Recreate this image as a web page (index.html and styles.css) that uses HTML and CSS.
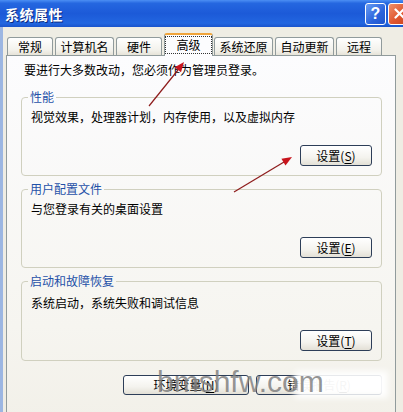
FILE: index.html
```html
<!DOCTYPE html>
<html lang="zh-CN">
<head>
    <meta charset="UTF-8">
    <meta name="viewport" content="width=device-width, initial-scale=1.0">
    <title>系统属性</title>
    <link rel="stylesheet" href="styles.css">
</head>
<body>
    <div class="window">
        <div class="titlebar">
            <span class="title">系统属性</span>
            <div class="caption-buttons">
                <span class="cap-btn help">?</span>
                <span class="cap-btn close">
                    <svg width="11" height="11" viewBox="0 0 11 11"><path d="M1.5 1.5 L9.5 9.5 M9.5 1.5 L1.5 9.5" stroke="#fff" stroke-width="2.2" stroke-linecap="round"/></svg>
                </span>
            </div>
        </div>

        <div class="client">
            <div class="tabs">
                <div class="tab">常规</div>
                <div class="tab tab-long">计算机名</div>
                <div class="tab">硬件</div>
                <div class="tab active"><span class="focus">高级</span></div>
                <div class="tab tab-long">系统还原</div>
                <div class="tab tab-long">自动更新</div>
                <div class="tab">远程</div>
            </div>

            <div class="page">
                <p class="intro">要进行大多数改动，您必须作为管理员登录。</p>

                <fieldset class="group">
                    <legend>性能</legend>
                    <p>视觉效果，处理器计划，内存使用，以及虚拟内存</p>
                    <div class="actions"><button class="btn">设置(<u>S</u>)</button></div>
                </fieldset>

                <fieldset class="group">
                    <legend>用户配置文件</legend>
                    <p>与您登录有关的桌面设置</p>
                    <div class="actions"><button class="btn">设置(<u>E</u>)</button></div>
                </fieldset>

                <fieldset class="group group-last">
                    <legend>启动和故障恢复</legend>
                    <p>系统启动，系统失败和调试信息</p>
                    <div class="actions"><button class="btn">设置(<u>T</u>)</button></div>
                </fieldset>

                <div class="footer-buttons">
                    <button class="btn wide">环境变量(<u>N</u>)</button>
                    <button class="btn wide">错误报告(<u>R</u>)</button>
                </div>
            </div>
        </div>

        <!-- red pointer arrows drawn on top of the dialog -->
        <svg class="marks" width="403" height="412" viewBox="0 0 403 412">
            <line x1="149" y1="106" x2="178" y2="70" stroke="#8e1c1c" stroke-width="1.2"/>
            <polygon points="184,62 181,72.3 174.7,67.3" fill="#c8141c"/>
            <line x1="234" y1="192" x2="284" y2="162" stroke="#8e1c1c" stroke-width="1.2"/>
            <polygon points="292,157 285.5,165.6 281.4,158.8" fill="#c8141c"/>
        </svg>

        <div class="smudge"></div>
        <div class="watermark">bmshfw.com</div>
    </div>
</body>
</html>
```

FILE: styles.css
```css
html, body {
    margin: 0;
    overflow: hidden;
}

body {
    font-family: "Noto Sans CJK SC", "Liberation Sans", sans-serif;
    font-size: 12px;
    line-height: 16px;
    color: #000;
    background: #fff;
}

.window {
    position: relative;
    width: 412px;
    height: 412px;
    overflow: hidden;
}

/* title bar */
.titlebar {
    height: 27px;
    display: flex;
    align-items: center;
    padding: 0 2px 0 5px;
    background: linear-gradient(#4c8ff4 0%, #2567e0 12%, #1c5ad8 50%, #2266e0 86%, #1a54cc 100%);
}

.title {
    color: #fff;
    font-weight: bold;
    font-size: 14px;
    letter-spacing: 0.5px;
    text-shadow: 1px 1px 0 #0c2a80;
}

.caption-buttons {
    margin-left: auto;
    display: flex;
    gap: 2px;
}

.cap-btn {
    width: 19px;
    height: 20px;
    border: 1px solid #fff;
    border-radius: 3px;
    display: flex;
    align-items: center;
    justify-content: center;
    color: #fff;
    font-family: "Liberation Sans", sans-serif;
    font-weight: bold;
    font-size: 16px;
}

.help {
    background: linear-gradient(135deg, #6a9cf2, #2a63dc 60%, #1f55cc);
}

.close {
    width: 20px;
    background: linear-gradient(135deg, #f0906a, #e0562e 55%, #c84420);
}

/* dialog client area */
.client {
    background: #efede4;
    border-left: 3px solid #9cb6e2;
    padding: 6px 0 0 3px;
    height: 400px;
}

.tabs {
    display: flex;
    align-items: flex-end;
    height: 22px;
    padding-left: 1px;
}

.tab {
    box-sizing: border-box;
    width: 46px;
    height: 18px;
    margin-right: 2px;
    border: 1px solid #919b9c;
    border-bottom: none;
    border-radius: 3px 3px 0 0;
    background: linear-gradient(#fff, #f3f2ec 70%, #e6e3d8);
    display: flex;
    align-items: center;
    justify-content: center;
}

.tab-long {
    width: 59px;
}

.tab.active {
    width: 49px;
    height: 23px;
    margin: 0 1px -1px 0;
    border-top: 2px solid #f0a43a;
    background: #fcfcfe;
    align-items: flex-start;
}

.focus {
    margin-top: 1px;
    padding: 0 10px;
    border: 1px dotted #333;
    line-height: 16px;
}

/* tab page */
.page {
    width: 361px;
    height: 380px;
    border: 1px solid #919b9c;
    padding: 6px 13px 0 14px;
    background: linear-gradient(#fcfcfe, #f6f5f0 70%, #f1efe7);
}

.intro {
    margin: 0;
    padding-left: 3px;
}

.group {
    margin: 11px 0 0;
    padding: 4px 9px 9px 9px;
    border: 1px solid #d0d0bf;
    border-radius: 4px;
    min-width: 0;
}

.group + .group {
    margin-top: 5px;
}

.group legend {
    margin-left: -3px;
    padding: 0 2px;
    color: #1f51a8;
}

.group p {
    margin: 0;
}

.group-last {
    padding-top: 6px;
}

.actions {
    display: flex;
    justify-content: flex-end;
    margin-top: 20px;
}

.group-last .actions {
    margin-top: 19px;
}

.btn {
    width: 72px;
    height: 21px;
    padding: 0;
    font-family: inherit;
    font-size: 12px;
    line-height: 16px;
    color: #000;
    border: 1px solid #2d3e58;
    border-radius: 3px;
    background: linear-gradient(#ffffff, #f4f3ee 60%, #e3e0d6);
}

.btn u {
    text-underline-offset: 2px;
}

.footer-buttons {
    display: flex;
    justify-content: flex-end;
    gap: 7px;
    margin-top: 14px;
}

.btn.wide {
    width: 126px;
    height: 20px;
}

/* overlays */
.marks {
    position: absolute;
    left: 0;
    top: 0;
    pointer-events: none;
}

.smudge {
    position: absolute;
    left: 295px;
    top: 371px;
    width: 93px;
    height: 27px;
    background: rgba(255, 255, 255, 0.96);
    filter: blur(3px);
}

.watermark {
    position: absolute;
    left: 157px;
    top: 366px;
    font-family: "Liberation Sans", sans-serif;
    font-size: 30px;
    line-height: 32px;
    color: rgba(130, 130, 130, 0.85);
}
```
